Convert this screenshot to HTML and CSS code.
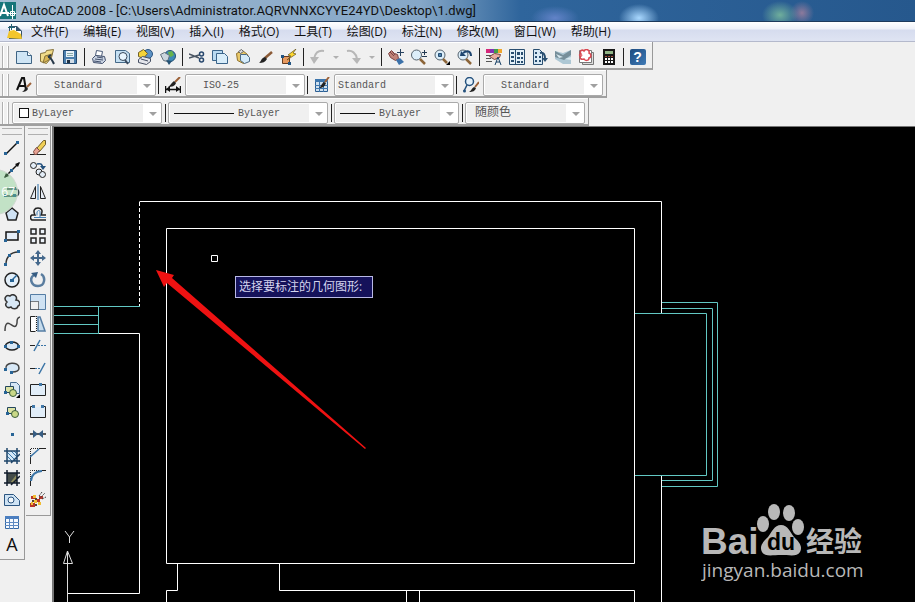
FILE: index.html
```html
<!DOCTYPE html>
<html lang="zh-CN">
<head>
    <meta charset="UTF-8">
    <meta name="viewport" content="width=device-width, initial-scale=1.0">
    <title>AutoCAD 2008</title>
    <link rel="stylesheet" href="styles.css">
</head>
<body>

    <header class="titlebar">
        <svg class="app-icon" width="17" height="18" viewBox="0 0 17 18"><path fill="#17757a" d="M0 0h16v17H0z"/><path fill="none" stroke="#fff" stroke-width="2" d="M0 14 4 3l4 11M1 11h8"/><path fill="none" stroke="#fff" d="M12.500 3v14M8 11.500h8M10.500 9.500h4v4h-4z"/></svg>
        <h1>AutoCAD 2008 - [C:\Users\Administrator.AQRVNNXCYYE24YD\Desktop\1.dwg]</h1>
    </header>

    <nav class="menubar">
        <svg class="doc-icon" width="16" height="16" viewBox="0 0 16 16"><path fill="#34526b" d="M2 2h8l5 5v8H2z"/><path fill="#fff" d="M3 3h6v4h5v3H3z"/><path fill="#f3c62c" d="M0 14 2 7l5-1 7 4 1 5z"/><path stroke="#267" d="M4.500 0v6M1 3.500h7"/></svg>
        <a href="#">文件(F)</a>
        <a href="#">编辑(E)</a>
        <a href="#">视图(V)</a>
        <a href="#">插入(I)</a>
        <a href="#">格式(O)</a>
        <a href="#">工具(T)</a>
        <a href="#">绘图(D)</a>
        <a href="#">标注(N)</a>
        <a href="#">修改(M)</a>
        <a href="#">窗口(W)</a>
        <a href="#">帮助(H)</a>
    </nav>

    <!-- Standard toolbar -->
    <div class="toolbar">
        <span class="grip"></span>
        <button title="新建"><svg viewBox="0 0 16 16"><path fill="#cfe5f5" stroke="#3f6484" d="M.5 2.500h11l4 4v8H.5z"/><path fill="#fff" stroke="#3f6484" d="M11.500 2.500v4h4"/></svg></button>
        <button title="打开"><svg viewBox="0 0 16 16"><path fill="#f1dc8a" stroke="#85713a" d="m1.500 4.500 5-1 1-2 7-1-2 8-5 6-6-2z"/><path fill="#d9b553" stroke="#85713a" d="m4 14 2-7 7-2-3 6z"/><path fill="none" stroke="#273848" stroke-width="2" d="M9 8c3 0 4 3 6 7M9 8l3-2"/></svg></button>
        <button title="保存"><svg viewBox="0 0 16 16"><path fill="#4b7fae" stroke="#244a70" d="M1.500 1.500h13v13h-13z"/><path fill="#e8f1f8" d="M4 2h8v6H4z"/><path stroke="#8aa" d="M5 4.500h6M5 6.500h6"/><path fill="#d2dde7" d="M4 10h8v4H4z"/><path fill="#234" d="M5 11h3v3H5z"/></svg></button>
        <span class="sep"></span>
        <button title="打印"><svg viewBox="0 0 16 16"><path fill="#fff" stroke="#4a5b78" d="m4.500 6.500 1-5 6 1-1 5z"/><path fill="#c9d3e2" stroke="#43516d" d="m1.500 9.500 3-3 9 1 1 4-3 3-9-1z"/><path stroke="#43516d" d="m4 10 8 1M6 8l6 1M3 12l7 1"/></svg></button>
        <button title="打印预览"><svg viewBox="0 0 16 16"><path fill="#c5e0f3" stroke="#456988" d="M1.500 1.500h10l4 3v9h-14z"/><circle cx="9" cy="7.500" r="4" fill="#e9f6ff" stroke="#39495c"/><path stroke="#39495c" stroke-width="2" d="m11 11 3 4"/></svg></button>
        <button title="发布"><svg viewBox="0 0 16 16"><circle cx="11" cy="5" r="4.500" fill="#5d92c4" stroke="#2b5580"/><path fill="#f4d33a" stroke="#71602a" d="m1.500 3.500 5-3 4 4-4 5-5-2z"/><path fill="#e4e6ec" stroke="#444e62" d="m1.500 10.500 4-3 8 2v3l-4 3-8-2z"/><path stroke="#444e62" d="m4 10 7 2"/></svg></button>
        <button title="三维 DWF"><svg viewBox="0 0 16 16"><circle cx="10" cy="7" r="5.500" fill="#3e8ab8" stroke="#255173"/><path fill="#68b34a" d="m8 3 4-1 2 4-3 2-2-1z"/><path fill="#cbd5dd" stroke="#63717d" d="m.5 5.500 4-2 5 3-2 6-4-1z"/><path fill="#255173" d="m6 11 6 1-3 4z"/></svg></button>
        <span class="sep"></span>
        <button title="剪切"><svg viewBox="0 0 16 16"><path fill="none" stroke="#4a5563" stroke-width="1.500" d="m0 5 10 4M0 9l10-3"/><circle cx="12.500" cy="5" r="2" fill="none" stroke="#27476d" stroke-width="1.500"/><circle cx="12.500" cy="11" r="2" fill="none" stroke="#27476d" stroke-width="1.500"/></svg></button>
        <button title="复制"><svg viewBox="0 0 16 16"><path fill="#b9daf1" stroke="#3b658b" d="M.5 1.500h10v10H.5z"/><path fill="#d8edfa" stroke="#3b658b" d="M4.500 4.500h8l3 3v7h-11z"/></svg></button>
        <button title="粘贴"><svg viewBox="0 0 16 16"><path fill="#e9c96a" stroke="#8f712c" d="m1.500 4.500 6-3 5 4 2 6-6 3-6-3z"/><path fill="#ddd" stroke="#666" d="m3.500 2.500 3-2 2 2-3 2z"/><path fill="#d4ebfa" stroke="#4c6a84" d="M5.500 5.500h6l3 3v4l-5 2-4-3z"/></svg></button>
        <button title="特性匹配"><svg viewBox="0 0 16 16"><path stroke="#8b5a36" stroke-width="2.500" d="m7 9 7-6"/><path fill="#222" d="M1 14c2-1 2-5 6-6l2 2c-2 3-4 4-8 4z"/></svg></button>
        <button title="块编辑器"><svg viewBox="0 0 16 16"><path fill="#e7995f" stroke="#633c21" d="M1.500 7.500h7v7h-7z"/><path fill="#ffd92f" stroke="#63501b" stroke-width=".7" d="m15 0-8 6 3 1-4 4 9-6-3-1z"/><path fill="#235481" d="M0 6h3v3H0zM7 13h3v3H7z"/></svg></button>
        <span class="sep"></span>
        <button title="放弃"><svg viewBox="0 0 16 16"><path fill="none" stroke="#b7b7b7" stroke-width="2" d="M14 2C8 1 5 4 4 10"/><path fill="#b7b7b7" d="M0 8h9l-5 7z"/></svg></button>
        <button class="drop" title="放弃列表"><span class="caret"></span></button>
        <button title="重做"><svg viewBox="0 0 16 16"><path fill="none" stroke="#b7b7b7" stroke-width="2" d="M1 2c5-1 9 2 10 8"/><path fill="#b7b7b7" d="M6 9h9l-4 6z"/></svg></button>
        <button class="drop" title="重做列表"><span class="caret"></span></button>
        <span class="sep"></span>
        <button title="实时平移"><svg viewBox="0 0 16 16"><path fill="#c28479" stroke="#7c4544" d="m.5 4.500 3-3 3 3 3 1 1 4-3 2-5-3z"/><path stroke="#7c4544" d="m2 3 4 4M4 2l3 4"/><path fill="#3b71a9" d="m8 11 4-2 4 4-5 3z"/><path stroke="#27425f" d="M12.500 0v7M9 3.500h7"/></svg></button>
        <button title="实时缩放"><svg viewBox="0 0 16 16"><circle cx="5.500" cy="6" r="5" fill="#dceefa" stroke="#55636e"/><path stroke="#8c6539" stroke-width="2.500" d="m9 10 5 5"/><path stroke="#253b53" d="M13.500 1v5M11 3.500h5M11 7.500h5"/></svg></button>
        <button title="窗口缩放"><svg viewBox="0 0 16 16"><circle cx="6" cy="6" r="5" fill="#dceefa" stroke="#55636e"/><path fill="#4e82ac" stroke="#254d72" d="M4.500 4.500h3v3h-3z"/><path stroke="#8c6539" stroke-width="2.500" d="m9 10 4 4"/><path fill="#000" d="M16 12v4h-4z"/></svg></button>
        <button title="缩放上一个"><svg viewBox="0 0 16 16"><circle cx="6" cy="6" r="5" fill="#dceefa" stroke="#55636e"/><path stroke="#8c6539" stroke-width="2.500" d="m9 10 5 5"/><path fill="none" stroke="#1d456f" stroke-width="2" d="M14 7c0-5-4-6-8-3"/><path fill="#1d456f" d="m3 7 1-5 5 5z"/></svg></button>
        <span class="sep"></span>
        <button title="特性"><svg viewBox="0 0 16 16"><path fill="#d5277a" d="M0 0h4v4H0z"/><path fill="#8432b4" d="M4 0h4v4H4z"/><path fill="#3fa04c" d="M8 0h4v4H8z"/><path fill="#f1a62c" d="M12 0h4v4h-4z"/><path fill="#e9aea0" stroke="#7b453d" d="m3.500 7.500 5-3 6 1-1 3-5 2z"/><path stroke="#555" d="M0 6.500h5M0 9.500h5M0 12.500h6"/><path fill="none" stroke="#174166" d="m9 16 3-8 3 8m-5-3h4"/></svg></button>
        <button title="设计中心"><svg viewBox="0 0 16 16"><path fill="#e4f0f8" stroke="#294e70" d="M.5.500h15v15H.5z"/><path stroke="#294e70" d="M6.500 1v14"/><path fill="#294e70" d="M2 3h3v2H2zm0 4h3v2H2zm0 4h3v2H2zM8 3h3v3H8zm4 0h2v3h-2zM8 8h3v2H8zm4 0h2v2h-2zm-4 4h3v2H8zm4 0h2v2h-2z"/></svg></button>
        <button title="工具选项板"><svg viewBox="0 0 16 16"><path fill="#d8e9f5" stroke="#294e70" d="M1.500.500h6l3 3v12h-9z"/><path fill="#294e70" d="M3 3h2v2H3zm0 4h2v2H3zm0 4h2v2H3zm4-4h2v2H7zm0 4h2v2H7z"/><path fill="none" stroke="#294e70" stroke-width="2" d="M8 4c4-1 5 2 5 6"/><path fill="#294e70" d="M10 9h6l-3 4z"/></svg></button>
        <button title="图纸集"><svg viewBox="0 0 16 16"><path fill="#adc7d4" d="m0 2 8 2 8-3v14H8l-8-5z"/><path fill="#778f9a" d="m0 2 8 4 8-5v5l-7 5-9-3z"/><path fill="#d9e9ef" d="m1 5 7 3-4 1zM10 10l6-2v3z"/></svg></button>
        <button title="标记集"><svg viewBox="0 0 16 16"><path fill="#ddd" stroke="#777" d="M4.500 3.500h11v12h-11z"/><path fill="#fff" stroke="#777" d="M1.500 1.500h12v12h-12z"/><path fill="#fff" stroke="#d94952" stroke-width="1.500" d="M3 5C1 2 4 0 6 2c2-3 6-1 5 2 3 1 2 5 0 5 0 3-4 3-5 1-3 1-5-1-3-3-2 0-2-2 0-2z"/></svg></button>
        <button title="计算器"><svg viewBox="0 0 16 16"><path fill="#181818" d="M2 0h12v16H2z"/><path fill="#91b586" d="M4 2h8v3H4z"/><path fill="#a14c3c" d="M4 7h2v1H4zm3 0h2v1H7zm3 0h2v1h-2z"/><path fill="#fff" d="M4 9h2v2H4zm3 0h2v2H7zm3 0h2v2h-2zm-6 3h2v2H4zm3 0h2v2H7zm3 0h2v2h-2z"/></svg></button>
        <span class="sep"></span>
        <button class="help" title="帮助"><span>?</span></button>
    </div>

    <!-- Styles toolbar -->
    <div class="toolbar">
        <span class="grip"></span>
        <button class="wide" title="文字样式"><svg viewBox="0 0 16 16"><path fill="none" stroke="#111" stroke-width="2" d="M1 13 6 1h2l2 12M3 9h6"/><path stroke="#9c6138" stroke-width="2" d="m11 10 4-4"/><path fill="#222" d="M6 15c2-1 3-4 5-5l1 2c-1 2-3 3-6 3z"/></svg></button>
        <label class="combo"><select disabled aria-label="文字样式"><option>Standard</option></select></label>
        <span class="sep short"></span>
        <button class="wide" title="标注样式"><svg viewBox="0 0 16 16"><path stroke="#111" stroke-width="1.500" d="M.5 9v7m15-7v7M1 12.500h14"/><path fill="#111" d="m1 12 4-3v6zM15 12l-4-3v6z"/><path stroke="#9c6138" stroke-width="2" d="m10 5 5-5"/><path fill="#222" d="M3 10c2-1 3-4 6-6l2 2c-1 3-4 4-8 4z"/></svg></button>
        <label class="combo"><select disabled aria-label="标注样式"><option>ISO-25</option></select></label>
        <span class="sep short"></span>
        <button class="wide" title="表格样式"><svg viewBox="0 0 16 16"><path fill="#cfe0ef" stroke="#2c5f93" d="M1.500 2.500h12v12h-12z"/><path fill="#3e76ad" d="M1 2h13v3H1z"/><path stroke="#3e76ad" d="M5.500 5v10m4-10v10M1 8.500h13M1 11.500h13"/><path stroke="#9c6138" stroke-width="2" d="m11 5 4-5"/><path fill="#222" d="M5 11c2-1 2-4 5-6l2 1c-1 3-3 5-7 5z"/></svg></button>
        <label class="combo flush"><select disabled aria-label="表格样式"><option>Standard</option></select></label>
        <span class="sep short"></span>
        <button class="wide" title="多重引线样式"><svg viewBox="0 0 16 16"><circle cx="6.500" cy="4.500" r="4" fill="#e6f2fb" stroke="#24517d" stroke-width="1.500"/><path fill="none" stroke="#24517d" stroke-width="1.500" d="m4 8-3 6"/><circle cx="1.500" cy="14" r="1.500" fill="#24517d"/><path stroke="#9c6138" stroke-width="2" d="m12 10 4-5"/><path fill="#222" d="M6 15c2-1 3-4 5-5l2 1c-1 3-3 4-7 4z"/></svg></button>
        <label class="combo"><select disabled aria-label="多重引线样式"><option>Standard</option></select></label>
    </div>

    <!-- Properties toolbar -->
    <div class="toolbar">
        <span class="grip"></span>
        <label class="combo color"><select disabled aria-label="颜色"><option>ByLayer</option></select></label>
        <span class="sep"></span>
        <label class="combo linetype"><select disabled aria-label="线型"><option>ByLayer</option></select></label>
        <span class="sep"></span>
        <label class="combo lineweight"><select disabled aria-label="线宽"><option>ByLayer</option></select></label>
        <span class="sep"></span>
        <label class="combo plot"><select disabled aria-label="打印样式"><option>随颜色</option></select></label>
    </div>

    <main class="workspace">
        <!-- Draw tools -->
        <div class="toolbox">
            <span class="grip-h"></span>
            <button title="直线"><svg viewBox="0 0 16 16"><path stroke="#111" stroke-width="1.500" d="M2 14 14 2"/><path fill="#276496" d="M0 12h3v3H0zM12 1h3v3h-3z"/></svg></button>
            <button title="构造线"><svg viewBox="0 0 16 16"><path stroke="#111" stroke-width="1.500" d="M1 15 15 1"/><path fill="#111" d="m0 16 2-5 3 3zM16 0l-5 2 3 3z"/><path fill="#276496" d="M6 7h3v3H6z"/></svg></button>
            <button title="多段线"><svg viewBox="0 0 16 16"><path fill="none" stroke="#35474c" stroke-width="1.500" d="M1 12h10M3 5h8c5 0 5 7 0 7"/><path fill="#276496" d="M0 10h3v3H0zM9 3h3v3H9zm0 7h3v3H9z"/></svg></button>
            <button title="正多边形"><svg viewBox="0 0 16 16"><path fill="#cfe2f4" stroke="#222" stroke-width="1.500" d="m8 2 6 5-2 7H4L2 7z"/></svg></button>
            <button title="矩形"><svg viewBox="0 0 16 16"><path fill="#e3edf8" stroke="#111" stroke-width="1.500" d="M2 4h12v8H2z"/><path fill="#276496" d="M0 11h3v3H0zM13 2h3v3h-3z"/></svg></button>
            <button title="圆弧"><svg viewBox="0 0 16 16"><path fill="none" stroke="#333" stroke-width="1.500" d="M2 14C2 7 7 2 14 2"/><path fill="#276496" d="M0 13h3v3H0zM4 4h3v3H4zM13 0h3v3h-3z"/></svg></button>
            <button title="圆"><svg viewBox="0 0 16 16"><circle cx="8" cy="8" r="7" fill="#e3eff9" stroke="#222" stroke-width="1.500"/><path stroke="#276496" stroke-width="1.500" d="m8 8 5-5"/><path fill="#276496" d="M6 7h4v3H6z"/></svg></button>
            <button title="修订云线"><svg viewBox="0 0 16 16"><path fill="#d8e8f6" stroke="#333" stroke-width="1.500" d="M3 8C-1 5 2 0 6 2c3-3 8 0 6 4 4 0 5 5 2 6-1 4-6 3-7 1-4 2-7-2-4-5z"/></svg></button>
            <button title="样条曲线"><svg viewBox="0 0 16 16"><path fill="none" stroke="#444" stroke-width="1.500" d="M1 15C1 8 3 6 6 8s6 5 7-1c0-3 0-5 3-6"/></svg></button>
            <button title="椭圆"><svg viewBox="0 0 16 16"><ellipse cx="8" cy="8" rx="6.500" ry="4" fill="#d8e8f6" stroke="#222" stroke-width="1.500"/><path fill="#276496" d="M0 7h3v3H0zM6 3h3v3H6zM13 7h3v3h-3z"/></svg></button>
            <button title="椭圆弧"><svg viewBox="0 0 16 16"><path fill="#d8e8f6" stroke="#444" stroke-width="1.500" d="M2 9C0 2 15 1 15 8c0 3-4 4-7 4"/><path fill="#276496" d="M0 8h3v3H0zM6 11h3v3H6z"/></svg></button>
            <button title="插入块"><svg viewBox="0 0 16 16"><path fill="#d6e6f5" stroke="#456a8d" d="M6.500.500h6l3 3v8h-9z"/><path fill="#dce3a4" stroke="#24475c" d="M1.500 4.500h8v6h-8z"/><circle cx="9" cy="11" r="3.500" fill="#c9d887" stroke="#3b5d3c"/><path fill="#276496" d="M0 9h3v3H0z"/><path fill="#000" d="M16 12v4h-4z"/></svg></button>
            <button title="创建块"><svg viewBox="0 0 16 16"><path fill="#dce3a4" stroke="#24475c" d="M3.500 3.500h8v6h-8z"/><circle cx="11" cy="10" r="3.500" fill="#c9d887" stroke="#3b5d3c"/><path fill="#276496" d="M2 8h3v3H2z"/></svg></button>
            <button title="点"><svg viewBox="0 0 16 16"><path fill="#276496" d="M7 7h3v3H7z"/></svg></button>
            <button title="图案填充"><svg viewBox="0 0 16 16"><path fill="#d5e8f7" d="M3 3h10v10H3z"/><path stroke="#3c78a8" d="m3 4 9 9M3 8l5 5M7 3l6 6m-3-6 3 3"/><path stroke="#1f4569" stroke-width="1.500" d="M3 0v16M13 0v16M0 3h16M0 13h16m-9 2 9-9"/></svg></button>
            <button title="渐变色"><svg viewBox="0 0 16 16"><path fill="#444c49" d="M3 3h10v10H3z"/><path fill="#8d8b5d" d="M13 4v9H6z"/><path stroke="#121c2b" stroke-width="1.500" d="M3 0v16M13 0v16M0 3h16M0 13h16m-9 2 9-9"/></svg></button>
            <button title="面域"><svg viewBox="0 0 16 16"><path fill="#cfe3f4" stroke="#2b5580" d="M.5 2.500h9l6 6v5H.5z"/><circle cx="7" cy="8" r="3" fill="#f2f7fb" stroke="#2b5580"/></svg></button>
            <button title="表格"><svg viewBox="0 0 16 16"><path fill="#f6faff" stroke="#3569a5" d="M1.500 2.500h13v12h-13z"/><path fill="#4c7fc0" d="M1 2h14v3H1z"/><path stroke="#5d8ac2" d="M5.500 5v10m4-10v10M1 8.500h14M1 11.500h14"/></svg></button>
            <button class="mtext" title="多行文字">A</button>
        </div>

        <!-- Modify tools -->
        <div class="toolbox">
            <span class="grip-h"></span>
            <button title="删除"><svg viewBox="0 0 16 16"><path stroke="#222" d="M0 14.500h16"/><path fill="#f0cf55" stroke="#6f5d28" d="m6.500 8.500 7-8h2v4l-6 7z"/><path fill="#e7a294" stroke="#7d4b42" d="m3.500 11.500 3-4 3 3-3 4h-2z"/></svg></button>
            <button title="复制对象"><svg viewBox="0 0 16 16"><g fill="#e3edf7" stroke="#222"><circle cx="3.500" cy="3.500" r="3"/><circle cx="9" cy="10" r="3"/><circle cx="12.500" cy="12.500" r="3"/></g><path fill="none" stroke="#24517d" stroke-width="1.500" d="M7 2c4-1 5 0 6 4"/><path fill="#24517d" d="M10 4h6l-3 4z"/></svg></button>
            <button title="镜像"><svg viewBox="0 0 16 16"><path fill="#e7edf5" stroke="#222" d="M5.500 2.500v12h-5zM10.500 2.500v12h5z"/><path stroke="#2d6fa7" d="M8 0v16"/></svg></button>
            <button title="偏移"><svg viewBox="0 0 16 16"><path fill="none" stroke="#222" stroke-width="1.500" d="M16 14H2c-2-1-2-4 0-5h3C3 5 4 2 8 2s5 3 3 7h5"/><path fill="none" stroke="#447fb3" d="M16 11.500H4m3-2V6c1-2 3-2 3 0v5"/></svg></button>
            <button title="阵列"><svg viewBox="0 0 16 16"><path fill="#edf3fa" stroke="#222" stroke-width="1.500" d="M1 1h5v5H1zM10 1h5v5h-5zM1 10h5v5H1zM10 10h5v5h-5z"/></svg></button>
            <button title="移动"><svg viewBox="0 0 16 16"><path stroke="#44688c" stroke-width="2" d="M8 2v12M2 8h12"/><path fill="#44688c" d="m8 0 3 4H5zM8 16l3-4H5zM0 8l4-3v6zM16 8l-4-3v6z"/></svg></button>
            <button title="旋转"><svg viewBox="0 0 16 16"><path fill="none" stroke="#5a7d9f" stroke-width="2.500" d="M11 2c5 3 4 12-3 12S-1 6 4 3"/><path fill="#365c82" d="m1 1 7-1-2 6z"/></svg></button>
            <button title="缩放"><svg viewBox="0 0 16 16"><path fill="#cfe2f3" stroke="#557da4" d="M.5.500h15v15H.5z"/><path fill="#f0f0f0" stroke="#111" stroke-dasharray="1 1" d="M.5 7.500h8v8h-8z"/></svg></button>
            <button title="拉伸"><svg viewBox="0 0 16 16"><path fill="#c6dced" stroke="#557da4" stroke-width="1.500" d="M8 1h2l5 14H8z"/><path fill="#fff" stroke="#222" d="M5.500.500h-5v15h5"/><path stroke="#222" stroke-dasharray="1 1" d="M6.500 0v16"/></svg></button>
            <button title="修剪"><svg viewBox="0 0 16 16"><path stroke="#222" d="M0 7.500h5"/><path stroke="#3a74a6" stroke-dasharray="2 1" d="M8 7.500h8"/><path stroke="#3a74a6" stroke-width="1.500" d="m4 13 6-11"/></svg></button>
            <button title="延伸"><svg viewBox="0 0 16 16"><path stroke="#222" d="M0 8.500h5"/><path stroke="#3a74a6" stroke-dasharray="2 1" d="M5 8.500h6"/><path stroke="#3a74a6" stroke-width="1.500" d="m9 14 6-11"/></svg></button>
            <button title="打断于点"><svg viewBox="0 0 16 16"><path fill="#e1edf8" stroke="#222" d="M.5 2.500h15v11H.5z"/><path fill="#4178a8" d="M9 1h3v3H9z"/></svg></button>
            <button title="打断"><svg viewBox="0 0 16 16"><path fill="#e1edf8" d="M1 3h14v11H1z"/><path fill="none" stroke="#222" d="M4 2.500H.5v11h15v-11H12"/><path fill="#4178a8" d="M2 1h3v3H2zM11 1h3v3h-3z"/></svg></button>
            <button title="合并"><svg viewBox="0 0 16 16"><path stroke="#222" stroke-width="1.500" d="M0 8h16"/><path fill="#365c82" d="m3 4 5 4-5 4zM13 4 8 8l5 4z"/></svg></button>
            <button title="倒角"><svg viewBox="0 0 16 16"><path fill="none" stroke="#222" stroke-dasharray="1 1" d="M.5 8V.500H9"/><path fill="none" stroke="#222" d="M.5 16V9M9 .500h7"/><path stroke="#3a74a6" stroke-width="1.500" d="m0 9 9-8"/></svg></button>
            <button title="圆角"><svg viewBox="0 0 16 16"><path fill="none" stroke="#222" stroke-dasharray="1 1" d="M.5 9V.500H10"/><path fill="none" stroke="#222" d="M.5 16v-5M12 .500h4"/><path fill="none" stroke="#3a74a6" stroke-width="2" d="M1 11C1 5 6 1 12 1"/></svg></button>
            <button title="分解"><svg viewBox="0 0 16 16"><path fill="#b9362a" d="M1 4h4v3H1zM6 7h4v3H6zM0 11h5v4H0zM9 4h4v3H9z"/><path fill="#f1bd32" d="M3 3h3v3H3zM4 8h3v3H4zM1 10h2v3H1zM8 10h3v3H8z"/><path fill="#5a4030" d="M5 6h2v2H5zM2 8h2v2H2zM5 12h2v2H5z"/><path stroke="#444" stroke-dasharray="2 1" d="m9 7 6-6M9 4l3-4M12 7l4-2"/></svg></button>
        </div>

        <!-- Model space -->
        <div class="canvas">
            <svg class="drawing" width="100%" height="100%">
                <g transform="translate(-54 -127)">
                    <g class="wall">
                        <path d="M139.500 201.500H661.500V313M661.500 476V640"/>
                        <path d="M166.500 228.500H634.500V563.500H166.500Z"/>
                        <path d="M98 333.500H139.500V593.500H67"/>
                        <path d="M177.500 564V590.500H166.500V640M279.500 564V590.500H634.500V640M406.500 590V640M419.500 590V640"/>
                        <path class="picked" d="M139.500 202V306"/>
                    </g>
                    <g class="window">
                        <path d="M53 306.500H140M53 315.500H98M53 324.500H98M53 333.500H98M98.500 306V334"/>
                        <path d="M662 302.500H717.500V486.500H662M662 308.500H712.500V480.500H662M635 313.500H706.500V475.500H635"/>
                    </g>
                    <!-- UCS icon -->
                    <g class="ucs">
                        <path d="M65 531 69.500 537 74 531M69.500 537V543M67.500 551 63.500 563.500H72.500ZM67.500 551V640"/>
                    </g>
                    <path class="pickbox" d="M211.500 255.500h6v6h-6z"/>
                    <path class="pointer" d="M156 270 174 275 172 278 366 448 365 449 167 283 164 287Z"/>
                </g>
            </svg>
            <div class="prompt">选择要标注的几何图形:</div>
            <svg class="watermark" width="170" height="90" viewBox="0 0 170 90">
                <g fill="#b8b8b8">
                    <text class="brand" x="0" y="54">Bai</text>
                    <ellipse cx="62" cy="24" rx="6" ry="8"/>
                    <ellipse cx="73" cy="12" rx="6" ry="8"/>
                    <ellipse cx="88" cy="13" rx="6" ry="8"/>
                    <ellipse cx="97" cy="27" rx="6" ry="8"/>
                    <path d="M80 25c7 0 9 7 13 12 5 5 9 9 6 15-3 5-10 3-19 3s-16 2-19-3c-3-6 1-10 6-15 4-5 6-12 13-12z"/>
                    <text class="jingyan" x="105" y="52">经验</text>
                    <text class="site" x="1" y="77">jingyan.baidu.com</text>
                </g>
                <text class="du" x="66" y="50">du</text>
            </svg>
        </div>
        <span class="badge">67</span>
    </main>

</body>
</html>
```
FILE: styles.css
```css
*,
*::before,
*::after {
    box-sizing: border-box;
}

body {
    margin: 0;
    height: 100vh;
    display: flex;
    flex-direction: column;
    overflow: hidden;
    background: #f0f0f0;
    color: #111;
    font-family: "Open Sans", "Noto Sans CJK SC", sans-serif;
    font-size: 12px;
}

button {
    display: flex;
    align-items: center;
    justify-content: center;
    width: 23px;
    height: 22px;
    padding: 0;
    border: none;
    background: none;
    flex: none;
}

button svg {
    width: 16px;
    height: 16px;
    fill: none;
}

/* Title bar */
.titlebar {
    display: flex;
    align-items: center;
    gap: 4px;
    height: 22px;
    flex: none;
    border-bottom: 1px solid #1d3a5c;
    background:
        radial-gradient(ellipse 20px 14px at 639px 18px, #a9d8ff, transparent),
        radial-gradient(ellipse 18px 14px at 780px 15px, #6fae9c, transparent),
        radial-gradient(ellipse 12px 12px at 802px 13px, #8d7a9c, transparent),
        radial-gradient(ellipse 24px 12px at 555px 18px, #6283c8, transparent),
        linear-gradient(to right, #a4bdd2 0, #93b0cb 200px, #86a8c8 420px, #2f659c 520px, #26588d 100%);
}

.titlebar h1 {
    margin: 0;
    font-family: Roboto, sans-serif;
    font-size: 13px;
    font-weight: normal;
    line-height: 20px;
    white-space: nowrap;
}

/* Menu bar */
.menubar {
    display: flex;
    align-items: center;
    height: 20px;
    padding-left: 7px;
    flex: none;
    border-bottom: 1px solid #b4b9cc;
    background: linear-gradient(to bottom, #fff 0, #eef1f9 7px, #d6dcee 8px, #dfe4f3 100%);
}

.menubar a {
    padding: 0 7px 0 8px;
    color: #111;
    line-height: 18px;
    text-decoration: none;
    white-space: nowrap;
}

/* Horizontal toolbars */
.toolbar {
    display: flex;
    align-items: center;
    align-self: flex-start;
    height: 28px;
    padding: 4px 3px 0 0;
    flex: none;
    border-right: 1px solid #999;
    border-bottom: 2px solid #a0a0a0;
    box-shadow: inset 0 1px #fff;
}

.grip {
    width: 7px;
    height: 22px;
    margin: 0 3px 0 2px;
    border: solid #b0b0b0;
    border-width: 0 1px;
    flex: none;
    background: linear-gradient(to right, #fff 1px, transparent 1px 4px, #fff 4px 5px);
}

.sep {
    width: 6px;
    height: 18px;
    flex: none;
    background: linear-gradient(#222, #222) center / 1px 100% no-repeat;
}

.sep.short {
    width: 5px;
}

.drop {
    width: 13px;
}

.wide {
    width: 24px;
}

.caret {
    border: 3px solid transparent;
    border-top-color: #b0b0b0;
    border-bottom: none;
}

.help span {
    width: 16px;
    height: 16px;
    border-radius: 2px;
    background: linear-gradient(135deg, #1c4b80, #3f7ab5);
    color: #fff;
    font-size: 14px;
    font-weight: bold;
    line-height: 16px;
}

/* Drop-downs */
.combo {
    position: relative;
    width: 120px;
    height: 22px;
    flex: none;
}

.combo::after {
    content: "";
    position: absolute;
    top: 10px;
    right: 5px;
    border: 4px solid transparent;
    border-top-color: #a0a0a0;
    border-bottom: none;
}

.combo select {
    display: block;
    width: 100%;
    height: 22px;
    padding: 0 22px 0 17px;
    border: 1px solid #aaa;
    border-radius: 2px;
    appearance: none;
    background: linear-gradient(to left, #fff 18px, #f0f0f0 18px);
    box-shadow: inset 0 0 0 1px #fff;
    color: #555;
    font-family: "Liberation Mono", "Noto Sans CJK SC", monospace;
    font-size: 10px;
    opacity: 1;
}

.combo.flush select {
    padding-left: 3px;
}

.combo.color {
    width: 150px;
}

.combo.color::before {
    content: "";
    position: absolute;
    top: 6px;
    left: 7px;
    width: 10px;
    height: 10px;
    border: 1px solid #111;
    background: #fff;
}

.combo.color select {
    padding-left: 19px;
}

.combo.linetype {
    width: 160px;
}

.combo.lineweight {
    width: 125px;
}

.combo.linetype::before,
.combo.lineweight::before {
    content: "";
    position: absolute;
    top: 11px;
    left: 6px;
    width: 60px;
    height: 1px;
    background: #111;
}

.combo.lineweight::before {
    width: 35px;
}

.combo.linetype select {
    padding-left: 69px;
}

.combo.lineweight select {
    padding-left: 44px;
}

.combo.plot select {
    padding-left: 9px;
    font-size: 12px;
}

/* Work area */
.workspace {
    position: relative;
    display: flex;
    align-items: flex-start;
    flex: 1;
    min-height: 0;
    gap: 1px;
}

.toolbox {
    width: 25px;
    padding-bottom: 4px;
    flex: none;
    border-right: 1px solid #999;
    border-bottom: 1px solid #999;
}

.toolbox button {
    width: 24px;
}

.grip-h {
    display: block;
    height: 7px;
    margin: 2px 2px 2px;
    border: solid #b0b0b0;
    border-width: 1px 0;
}

.mtext {
    color: #111;
    font-family: "Open Sans", sans-serif;
    font-size: 18px;
    line-height: 22px;
}

.canvas {
    position: relative;
    flex: 1;
    align-self: stretch;
    overflow: hidden;
    border-top: 1px solid #777;
    border-left: 2px solid #777;
    background: #000;
}

.drawing {
    display: block;
    fill: none;
}

.wall {
    stroke: #fff;
}

.picked {
    stroke-dasharray: 4 2;
}

.window {
    stroke: #62c8c4;
}

.ucs {
    stroke: #ddd;
}

.pickbox {
    stroke: #fff;
}

.pointer {
    fill: #ee1212;
}

.prompt {
    position: absolute;
    left: 181px;
    top: 149px;
    height: 22px;
    padding: 0 10px 0 3px;
    border: 1px solid #b9b9e6;
    background: #15125a;
    color: #d4d4ee;
    line-height: 20px;
    white-space: nowrap;
}

.watermark {
    position: absolute;
    right: 44px;
    bottom: 12px;
}

.brand {
    font: bold 37px "Liberation Sans", sans-serif;
}

.du {
    fill: #000;
    font: bold 23px "Liberation Sans", sans-serif;
}

.jingyan {
    font: bold 28px "Noto Sans CJK SC", sans-serif;
}

.site {
    font: 19px "Open Sans", sans-serif;
}

/* Floating status ball at the window edge */
.badge {
    position: absolute;
    left: -28px;
    top: 43px;
    width: 46px;
    height: 46px;
    padding-right: 2px;
    border: 1px solid #cfd8cf;
    border-radius: 50%;
    background: rgba(125, 205, 135, 0.4);
    color: #fff;
    line-height: 44px;
    text-align: right;
    pointer-events: none;
}
```
